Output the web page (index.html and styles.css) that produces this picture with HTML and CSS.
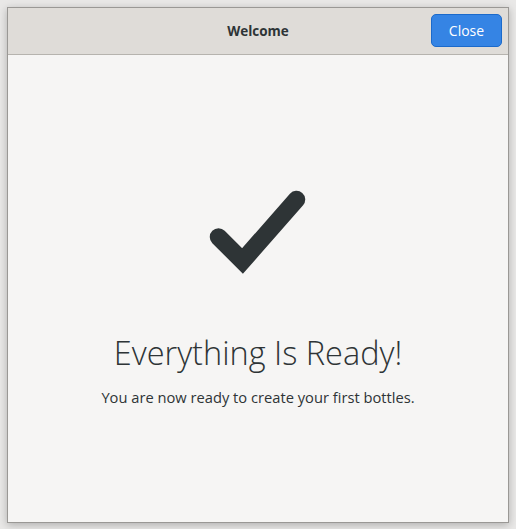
FILE: index.html
```html
<!DOCTYPE html>
<html lang="en">

<head>
    <meta charset="UTF-8">
    <meta name="viewport" content="width=device-width, initial-scale=1.0">
    <title>Welcome</title>
    <link rel="stylesheet" href="styles.css">
</head>

<body>
    <div class="window">
        <div class="headerbar">
            <h1>Welcome</h1>
            <button class="close-btn">Close</button>
        </div>
        <div class="content">
            <svg class="check" width="100" height="90" viewBox="0 0 100 90">
                <path d="M10.5 52 L34.5 76 L88.5 14.5" fill="none" stroke="#2e3436" stroke-width="17.5"
                    stroke-linecap="round" stroke-linejoin="miter" />
            </svg>
            <h2>Everything Is Ready!</h2>
            <p>You are now ready to create your first bottles.</p>
        </div>
    </div>
</body>
</html>
```

FILE: styles.css
```css
* {
    margin: 0;
    padding: 0;
    box-sizing: border-box;
}

body {
    width: 516px;
    height: 529px;
    background: #e9e8e7;
    padding: 7px 7px 6px 7px;
    font-family: 'Open Sans', 'Noto Sans', sans-serif;
    color: #2e3436;
    overflow: hidden;
}

.window {
    width: 502px;
    height: 516px;
    border: 1px solid #9a9895;
    background: #f6f5f4;
    box-shadow: 0 2px 8px rgba(0, 0, 0, 0.25);
    display: flex;
    flex-direction: column;
}

.headerbar {
    height: 47px;
    background: #dfdcd8;
    border-bottom: 1px solid #b6b3ae;
    display: flex;
    align-items: center;
    justify-content: center;
    position: relative;
}

.headerbar h1 {
    font-size: 13.5px;
    font-weight: 700;
    color: #2e3436;
}

.close-btn {
    position: absolute;
    right: 6px;
    top: 6px;
    width: 71px;
    height: 33px;
    border: 1px solid #1b6acb;
    border-radius: 5px;
    background: #3584e4;
    color: #fff;
    font-family: 'Open Sans', 'Noto Sans', sans-serif;
    font-size: 14px;
    font-weight: 400;
}

.content {
    flex: 1;
    display: flex;
    flex-direction: column;
    align-items: center;
    padding-top: 130px;
}

.check {
    display: block;
}

.content h2 {
    margin-top: 56px;
    font-size: 32.5px;
    font-weight: 300;
    color: #2e3436;
    line-height: 44px;
}

.content p {
    margin-top: 12px;
    font-size: 14.7px;
    color: #2e3436;
}
```
